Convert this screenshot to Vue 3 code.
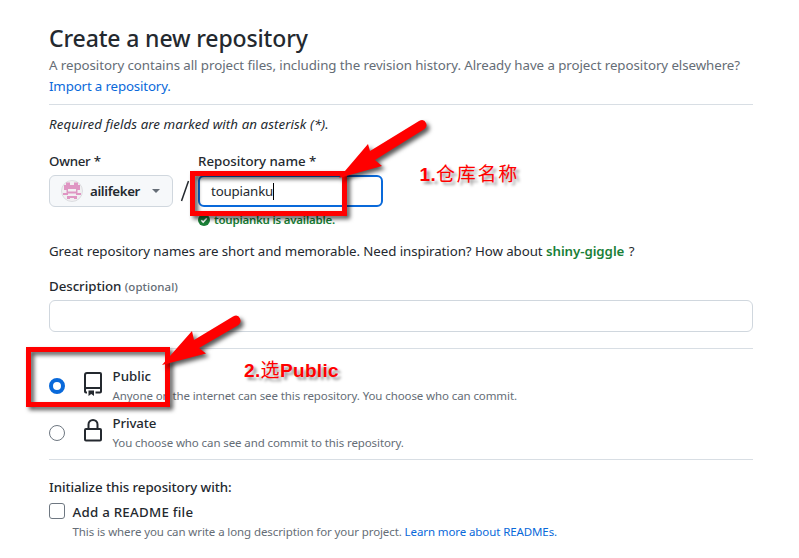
<script setup>
import { ref } from 'vue'

const name = ref('toupianku')
const visibility = ref('public')
const readme = ref(false)
</script>

<template>
  <main class="page">
    <h1><span>Create a new repository</span></h1>
    <p class="lead">
      <span>A repository contains all project files, including the revision history. Already have a project repository elsewhere?</span><br>
      <a class="import">Import a repository.</a>
    </p>
    <hr>
    <p class="required"><span>Required fields are marked with an asterisk (*).</span></p>

    <div class="identity">
      <div class="owner">
        <div class="label"><span>Owner *</span></div>
        <button class="picker">
          <svg class="avatar" width="22" height="22" viewBox="0 0 22 22">
            <circle cx="11" cy="11" r="10.5" fill="#f1f0f2" stroke="#dcdde0" />
            <path fill="#df96c3" d="M5 2.500h4v2.500h4v-2.500h4v2.500h2v4H3V5h2zM3 9h4v2.500h8V9h4v1h-2.500v3H20v2h-5v-1.500H7V15H2v-2h3.500v-3H3zM6 16h10v3h-3v-1H9v1H6z" />
          </svg>
          <b>ailifeker</b>
          <i class="caret"></i>
        </button>
      </div>
      <div class="slash">
        <svg width="10" height="22" viewBox="0 0 10 22"><path d="M8.500 1L1.500 21" stroke="#24292f" stroke-width="1.500" /></svg>
      </div>
      <div class="repo">
        <div class="label repo-label"><span>Repository name *</span></div>
        <div class="name-input"><span>{{ name }}</span><i></i></div>
        <div class="available">
          <svg width="12" height="12" viewBox="0 0 12 12">
            <circle cx="6" cy="6" r="6" fill="#1a7f37" />
            <path d="M3.3 6.2l1.9 1.9 3.6-3.8" fill="none" stroke="#fff" stroke-width="1.5" />
          </svg>
          <b>{{ name }} is available.</b>
        </div>
      </div>
    </div>

    <p class="hint"><span>Great repository names are short and memorable. Need inspiration? How about <b>shiny-giggle</b>&nbsp;?</span></p>
    <div class="label desc"><span>Description</span> <small>(optional)</small></div>
    <div class="desc-input"></div>
    <hr>

    <div class="choice public">
      <i class="radio" :class="{ on: visibility === 'public' }"></i>
      <svg class="glyph" width="24" height="24" viewBox="0 0 24 24" fill="none" stroke="#24292f" stroke-width="2">
        <path d="M6 20.500H5A1 1 0 0 1 4 19.500V3A2 2 0 0 1 6 1H19A1 1 0 0 1 20 2V19.500A1 1 0 0 1 19 20.500H14.500M4 18V17.500A1.500 1.500 0 0 1 5.500 16H20" />
        <path d="M7.500 18.500h5.500v5.500l-2.750-2-2.750 2z" fill="#24292f" stroke="none" />
      </svg>
      <div>
        <div class="name"><span>Public</span></div>
        <div class="sub"><span>Anyone on the internet can see this repository. You choose who can commit.</span></div>
      </div>
    </div>
    <div class="choice private">
      <i class="radio" :class="{ on: visibility === 'private' }"></i>
      <svg class="glyph" width="24" height="24" viewBox="0 0 24 24" fill="none" stroke="#24292f" stroke-width="2">
        <rect x="4" y="10" width="16" height="11.500" rx="1" />
        <path d="M7.500 10V5.500a4.500 4.500 0 0 1 9 0V10" />
      </svg>
      <div>
        <div class="name"><span>Private</span></div>
        <div class="sub"><span>You choose who can see and commit to this repository.</span></div>
      </div>
    </div>
    <hr>

    <div class="label init"><span>Initialize this repository with:</span></div>
    <div class="readme">
      <i class="box" :class="{ on: readme }"></i>
      <div>
        <div class="name wide"><span>Add a README file</span></div>
        <div class="sub"><span>This is where you can write a long description for your project. <a>Learn more about READMEs.</a></span></div>
      </div>
    </div>

    <svg class="marks" width="799" height="558" viewBox="0 0 799 558">
      <g class="shadowed" fill="none" stroke="#f00" stroke-width="5">
        <rect x="192.500" y="173.500" width="152" height="40" />
        <rect x="28.500" y="349.500" width="139" height="55" />
      </g>
      <g class="shadowed" fill="#f00">
        <path d="M339 178L368 144L370 151L419 121Q424 118.500 426 123Q428 127 423 130L375 160L382 166Z" />
        <path d="M162 365L192 331L194 340L233 316.500Q238 314 240 318.500Q242 323 237 326L199 348L206 353.500Z" />
      </g>
    </svg>
    <div class="note one">1.<span>仓库名称</span></div>
    <div class="note two">2.<span>选</span>Public</div>
  </main>
</template>

<style>
body { background: #fff; }
</style>

<style scoped>
.page {
  position: relative;
  box-sizing: border-box;
  width: 799px;
  height: 558px;
  padding: 20px 46px 0 49px;
  overflow: hidden;
  color: #24292f;
  font: 13.3px/21px "Noto Sans", "Open Sans", sans-serif;
  letter-spacing: -.06px;
  white-space: nowrap;
}
h1, p { margin: 0; }
h1 { height: 35px; font-size: 23px; line-height: 36px; font-weight: 500; letter-spacing: -.14px; }
.lead { height: 49px; color: #656d76; }
.import { letter-spacing: -.15px; }
a { color: #0969da; }
hr { height: 1px; margin: 0; border: 0; background: #d8dee4; }
.required { height: 46px; padding-top: 9px; box-sizing: border-box; font-style: italic; letter-spacing: .07px; }
.label, .name { font-weight: 500; }
.identity { display: flex; height: 90px; }
.identity .label { height: 24px; }
.owner { width: 124px; }
.owner .label { letter-spacing: -.25px; }
.repo-label { letter-spacing: -.02px; }
.picker {
  display: flex;
  align-items: center;
  box-sizing: border-box;
  width: 124px;
  height: 32px;
  padding: 0 12px 0 11px;
  border: 1px solid #d0d7de;
  border-radius: 6px;
  background: #f6f8fa;
  color: #24292f;
  font: inherit;
}
.picker b, .available b, .hint b { font-weight: 600; }
.picker b { margin-left: 7px; letter-spacing: -.35px; }
.caret { margin-left: auto; border: 4px solid transparent; border-top-color: #656d76; border-bottom: 0; }
.slash { width: 25px; padding: 29px 0 0 7px; box-sizing: border-box; }
.name-input {
  display: flex;
  align-items: center;
  box-sizing: border-box;
  width: 185px;
  height: 32px;
  padding-left: 11px;
  border: 2px solid #0969da;
  border-radius: 6px;
  letter-spacing: -.17px;
}
.name-input i { width: 1px; height: 17px; background: #000; }
.available { display: flex; align-items: center; gap: 4px; height: 25px; color: #1a7f37; font-size: 11.5px; letter-spacing: -.22px; }
.hint { height: 35px; letter-spacing: -.065px; }
.hint b { margin-right: 1px; color: #1a7f37; }
.desc { height: 24px; letter-spacing: -.06px; }
.desc small { color: #656d76; font-size: 11.5px; letter-spacing: .05px; }
.desc-input { height: 32px; box-sizing: border-box; margin-bottom: 16px; border: 1px solid #d0d7de; border-radius: 6px; }
.choice { display: flex; height: 47px; }
.choice.public { padding-top: 17px; }
.choice.private { height: 46px; }
.public .name { letter-spacing: .05px; }
.private .name { letter-spacing: -.15px; }
.radio { box-sizing: border-box; width: 16px; height: 16px; margin: 12px 16px 0 0; border: 1px solid #6e7781; border-radius: 50%; }
.radio.on { border: 4.500px solid #0969da; }
.glyph { margin: 6px 7.500px 0 0; }
.name { height: 20px; line-height: 20px; }
.name.wide { letter-spacing: .25px; }
.sub { height: 20px; line-height: 20px; color: #656d76; font-size: 11.5px; letter-spacing: -.1px; }
.init { padding-top: 17px; height: 25px; }
.readme { display: flex; }
.box { box-sizing: border-box; width: 16px; height: 16px; margin: 1px 7.500px 0 0; border: 1px solid #6e7781; border-radius: 3px; }
.marks { position: absolute; left: 0; top: 0; }
.shadowed { filter: drop-shadow(3px 3px 2px rgba(0, 0, 0, .65)); }
.note {
  position: absolute;
  color: #f00;
  font: bold 19px/24px "Liberation Sans", "Noto Sans CJK SC", sans-serif;
  letter-spacing: .35px;
  text-shadow: 3px 3px 3px rgba(0, 0, 0, .4);
}
.note span { font-weight: 400; }
.one { left: 419.500px; top: 163px; }
.one span { letter-spacing: 1.700px; }
.two { left: 244px; top: 359px; }
</style>
